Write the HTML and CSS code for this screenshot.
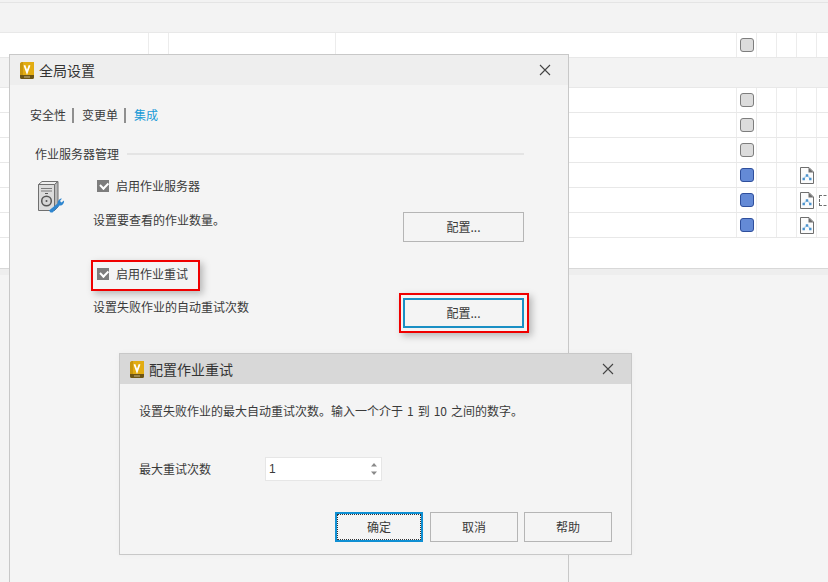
FILE: index.html
```html
<!DOCTYPE html>
<html lang="zh">
<head>
<meta charset="utf-8">
<title>配置作业重试</title>
<link rel="stylesheet" href="styles.css">
</head>
<body>
<svg class="defs" width="0" height="0" aria-hidden="true">
  <symbol id="vault" viewBox="0 0 14 17">
    <path d="M2.500 0H14V13H0V2.500A2.500 2.500 0 0 1 2.500 0Z" fill="#e2ac12"/>
    <path d="M0 13H14V15.500A1.500 1.500 0 0 1 12.500 17H1.500A1.500 1.500 0 0 1 0 15.500Z" fill="#6d5514"/>
    <path d="M0 2.500A2.500 2.500 0 0 1 2.500 0H3V13H0Z" fill="#c8960e"/>
    <path d="M4.400 3.200L7 10.400L9.600 3.200" fill="none" stroke="#fff" stroke-width="1.800"/>
    <path d="M4 15H10" stroke="#c9b98a" stroke-width="1"/>
  </symbol>
  <symbol id="doc" viewBox="0 0 14 17">
    <path d="M.5.5H9L13.500 5V16.500H.5Z" fill="#fbfbfb" stroke="#6e6e6e"/>
    <path d="M8.500 .5L13.500 5.500H8.500Z" fill="#6e6e6e"/>
    <path d="M6 9L4 11.500M8 9L10 11.500" stroke="#c4dcee" stroke-width="1.500"/>
    <path d="M5.800 7.300H8.200V9.700H5.800ZM2.500 10.800H4.900V13.200H2.500ZM9.100 10.800H11.500V13.200H9.100Z" fill="#4a93cf"/>
  </symbol>
  <symbol id="close" viewBox="0 0 12 12">
    <path d="M1 1L11 11M11 1L1 11" fill="none" stroke="#444" stroke-width="1.100"/>
  </symbol>
</svg>

<main class="app">
  <div class="app-top"></div>
  <div class="band"></div>
  <div class="row row-first">
    <span class="gap"></span><span class="cell wide-a"></span><span class="cell wide-b"></span><span class="cell wide-c"></span>
    <span class="cell"><i class="status"></i></span><span class="cell"></span><span class="cell"></span><span class="cell"></span><span class="cell end"></span>
  </div>
  <div class="band group"></div>
  <div class="row">
    <span class="gap"></span><span class="cell"><i class="status"></i></span><span class="cell"></span><span class="cell"></span><span class="cell"></span><span class="cell end"></span>
  </div>
  <div class="row">
    <span class="gap"></span><span class="cell"><i class="status"></i></span><span class="cell"></span><span class="cell"></span><span class="cell"></span><span class="cell end"></span>
  </div>
  <div class="row">
    <span class="gap"></span><span class="cell"><i class="status"></i></span><span class="cell"></span><span class="cell"></span><span class="cell"></span><span class="cell end"></span>
  </div>
  <div class="row">
    <span class="gap"></span><span class="cell"><i class="status on"></i></span><span class="cell"></span><span class="cell"></span><span class="cell"><svg class="doc"><use href="#doc"/></svg></span><span class="cell end"></span>
  </div>
  <div class="row">
    <span class="gap"></span><span class="cell"><i class="status on"></i></span><span class="cell"></span><span class="cell"></span><span class="cell"><svg class="doc"><use href="#doc"/></svg></span><span class="cell end"><i class="dashed"></i></span>
  </div>
  <div class="row">
    <span class="gap"></span><span class="cell"><i class="status on"></i></span><span class="cell"></span><span class="cell"></span><span class="cell"><svg class="doc"><use href="#doc"/></svg></span><span class="cell end"></span>
  </div>
  <div class="blank"></div>
  <div class="app-foot"></div>
</main>

<section class="dialog global">
  <header class="titlebar">
    <svg class="logo"><use href="#vault"/></svg>
    <h1>全局设置</h1>
    <svg class="close"><use href="#close"/></svg>
  </header>
  <div class="global-body">
    <nav class="tabs">
      <a>安全性</a><i class="sep"></i><a>变更单</a><i class="sep"></i><a class="active">集成</a>
    </nav>
    <div class="legend"><span>作业服务器管理</span><i></i></div>
    <div class="panel">
      <svg class="server" viewBox="0 0 28 34" aria-hidden="true">
        <path d="M.5 3.500L4 .5H20L16.500 3.500Z" fill="#efefef" stroke="#6f6f6f"/>
        <path d="M16.500 3.500L20 .5V26L16.500 29.500Z" fill="#b9b9b9" stroke="#6f6f6f"/>
        <path d="M.5 3.500H16.500V29.500H.5Z" fill="#dcdcdc" stroke="#6f6f6f"/>
        <path d="M3 7.500H14M3 10H14" stroke="#7a7a7a"/>
        <path d="M7 12.500H10" stroke="#555"/>
        <circle cx="8.500" cy="20" r="4.800" fill="#d6d6d6" stroke="#555" stroke-width="1.500"/>
        <circle cx="8.500" cy="20" r="1" fill="#555"/>
        <path d="M12.500 31.500L11 29.500L19.500 22.500C19.500 19.500 21.500 17.500 24 17.500L22 20L23.500 21.500L26 19.500C26.500 22.500 24 25 21.500 24.500L14.500 31.500Z" fill="#2f86cf"/>
      </svg>
      <div class="settings">
        <label class="check first"><i class="box"></i>启用作业服务器</label>
        <div class="line first-line">
          <p>设置要查看的作业数量。</p>
          <button class="btn config" type="button">配置...</button>
        </div>
        <label class="check second"><i class="box"></i>启用作业重试</label>
        <div class="line second-line">
          <p>设置失败作业的自动重试次数</p>
          <button class="btn config focus" type="button">配置...</button>
        </div>
      </div>
    </div>
    <i class="mark mark-check"></i>
    <i class="mark mark-btn"></i>
  </div>
</section>

<section class="dialog retry">
  <header class="titlebar dark">
    <svg class="logo"><use href="#vault"/></svg>
    <h1>配置作业重试</h1>
    <svg class="close"><use href="#close"/></svg>
  </header>
  <div class="retry-body">
    <p class="intro">设置失败作业的最大自动重试次数。输入一个介于 1 到 10 之间的数字。</p>
    <div class="field">
      <label>最大重试次数</label>
      <div class="spin">
        <span>1</span>
        <svg viewBox="0 0 8 14" aria-hidden="true"><path d="M4 1L7 4.500H1ZM4 13L1 9.500H7Z" fill="#8a8a8a"/></svg>
      </div>
    </div>
    <div class="actions">
      <button class="btn default" type="button"><span>确定</span></button>
      <button class="btn" type="button">取消</button>
      <button class="btn" type="button">帮助</button>
    </div>
  </div>
</section>
</body>
</html>
```
FILE: styles.css
```css
* { box-sizing: border-box; }
html, body { margin: 0; height: 582px; overflow: hidden; }
body {
  position: relative;
  background: #f4f4f4;
  color: #3a3a3a;
  font: 12px/18px "Noto Sans CJK SC", "Liberation Sans", sans-serif;
}
.defs { position: absolute; }
p, h1 { margin: 0; font-weight: 400; }

/* background application */
.app { display: flex; flex-direction: column; }
.app-top { height: 3px; border-bottom: 1px solid #e4e4e4; background: #f2f2f2; }
.band { height: 30px; background: #f3f3f3; border-bottom: 1px solid #e8e8e8; }
.band.group { background: #f3f3f3; }
.row { display: flex; height: 25px; background: #fff; border-bottom: 1px solid #e8e8e8; }
.gap { flex: 1; }
.cell {
  width: 20px;
  flex: none;
  border-left: 1px solid #ececec;
  display: flex;
  align-items: center;
  padding-left: 3px;
  overflow: hidden;
}
.cell.end { width: 12px; }
.row-first .gap { flex: none; width: 148px; }
.row-first .wide-a { width: 20px; }
.row-first .wide-b { width: 167px; }
.row-first .wide-c { width: 401px; }
.status {
  width: 14px;
  height: 14px;
  flex: none;
  border: 1px solid #7d7d7d;
  border-radius: 3px;
  background: #dcdcdc;
}
.status.on { background: #648ad6; border-color: #2f4f9c; }
.doc { width: 14px; height: 17px; flex: none; margin-top: 1px; }
.dashed {
  width: 12px;
  height: 11px;
  flex: none;
  margin-left: -1px;
  border: 1px dashed #6e6e6e;
}
.blank { height: 31px; background: #fff; border-bottom: 1px solid #d8d8d8; }
.app-foot { height: 6px; background: #eeeeee; }

/* dialogs */
.dialog {
  position: absolute;
  background: #f4f4f4;
  border: 1px solid #c8c8c8;
}
.global { left: 9px; top: 54px; width: 560px; height: 540px; }
.retry {
  left: 119px;
  top: 353px;
  width: 513px;
  height: 202px;
  box-shadow: 0 0 6px rgba(0, 0, 0, .03);
}
.titlebar {
  display: flex;
  align-items: center;
  height: 30px;
  padding: 0 17px 0 10px;
  background: #eeeeee;
}
.titlebar.dark { background: #d8d8d8; }
.titlebar h1 { flex: 1; margin-left: 5px; font-size: 14px; line-height: 20px; color: #333; }
.logo { width: 14px; height: 17px; flex: none; }
.close { width: 12px; height: 12px; flex: none; }

/* global settings */
.global-body { position: relative; padding: 21px 44px 0 20px; }
.tabs { display: flex; align-items: center; height: 18px; }
.tabs a { color: #3a3a3a; }
.tabs a.active { color: #1a9bd7; }
.sep { width: 2px; height: 15px; margin: 0 8px 0 6px; background: #8f8f8f; }
.legend {
  display: flex;
  align-items: center;
  gap: 8px;
  margin: 21px 0 0 5px;
  height: 18px;
}
.legend i { flex: 1; height: 2px; background: #e4e4e4; }
.panel { display: flex; align-items: flex-start; margin-top: 18px; padding-left: 8px; }
.server { width: 28px; height: 34px; flex: none; }
.settings { flex: 1; margin: -4px 0 0 27px; display: flex; flex-direction: column; }
.check { display: flex; align-items: center; gap: 7px; height: 18px; padding-left: 4px; }
.box {
  position: relative;
  width: 12px;
  height: 12px;
  background: #7d7d7d;
}
.box::after {
  content: "";
  position: absolute;
  left: 3px;
  top: 2px;
  width: 6px;
  height: 3.500px;
  border-left: 2px solid #fff;
  border-bottom: 2px solid #fff;
  transform: rotate(-45deg);
}
.line { display: flex; justify-content: space-between; align-items: flex-start; }
.first-line { margin-top: 17px; }
.first-line p { margin-top: -1px; }
.second { margin-top: 23px; }
.second-line { margin-top: 15px; }
.btn {
  width: 88px;
  height: 30px;
  padding: 0;
  background: #f4f4f4;
  border: 1px solid #b5b5b5;
  color: #3a3a3a;
  font: inherit;
}
.btn.config { width: 121px; }
.btn.focus { border: 2px solid #1a8fc4; }
.mark {
  position: absolute;
  border: 2px solid #f00000;
  box-shadow: 3px 3px 7px rgba(0, 0, 0, .25);
}
.mark-check { left: 81px; top: 175px; width: 109px; height: 31px; }
.mark-btn { left: 389px; top: 208px; width: 130px; height: 40px; }

/* retry dialog */
.retry-body { padding: 18px 19px 0; }
.intro { word-spacing: 1.3px; }
.field { display: flex; align-items: center; margin-top: 37px; }
.field label { width: 126px; }
.spin {
  display: flex;
  justify-content: space-between;
  align-items: center;
  width: 117px;
  height: 24px;
  padding: 0 3px;
  background: #fff;
  border: 1px solid #e6e6e6;
}
.spin span { font-family: "Liberation Sans", sans-serif; line-height: 20px; }
.spin svg { width: 8px; height: 14px; }
.actions { display: flex; justify-content: flex-end; gap: 6px; margin-top: 31px; }
.default { width: 88px; margin-right: 1px; border: 2px solid #0f8fd3; }
.default span {
  display: block;
  line-height: 24px;
  border: 1px dotted #333;
}
```
